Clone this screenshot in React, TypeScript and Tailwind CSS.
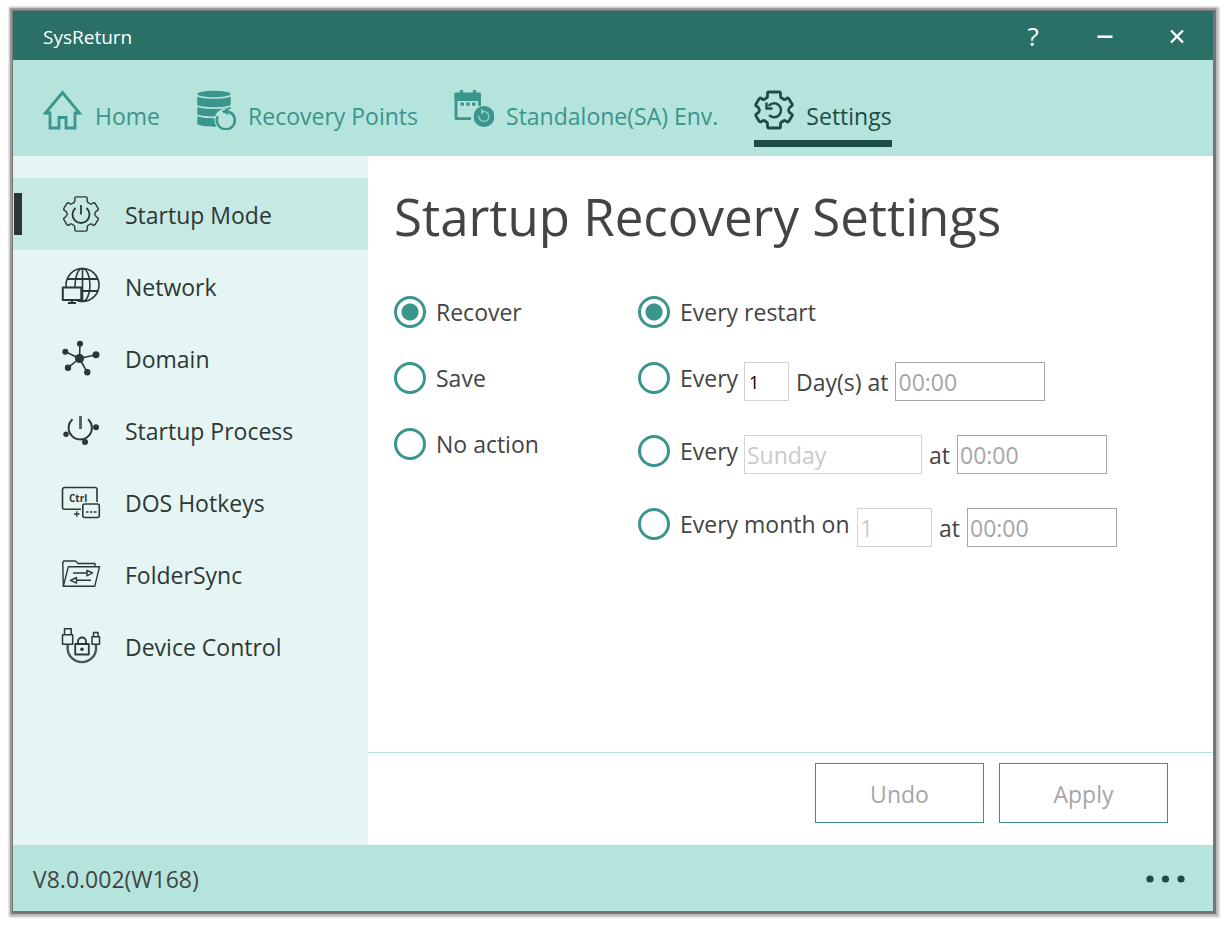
import React, { useState } from 'react';
import clsx from 'clsx';

// Six-toothed gear, shared by the settings tab and the startup mode entry
const GEAR =
    "M15 2h10q1.500 0 1.500 1.500V6q0 2 2 2.500l1.500 1q1 .5 2.500-1 1.500-1 2.500.5l3 5q.8 1.500-1 2.500-2.500 1.500-2.500 3.500t2.500 3.500q1.800 1 1 2.500l-3 5q-1 1.500-2.500.5-1.500-1.500-2.500-1l-1.500 1q-2 .5-2 2.500v2.500q0 1.500-1.500 1.500H15q-1.500 0-1.500-1.500V34q0-2-2-2.500l-1.500-1q-1-.5-2.500 1-1.500 1-2.500-.5l-3-5q-.8-1.500 1-2.500Q5.500 22 5.500 20T3 16.500Q1.200 15.500 2 14l3-5q1-1.500 2.500-.5 1.500 1.500 2.500 1l1.500-1q2-.5 2-2.500V3.500Q13.500 2 15 2z";

function Icon({ children, width = 1.6 }: { children: React.ReactNode; width?: number }) {
    return (
        <svg
            viewBox="0 0 40 40"
            className="size-10 shrink-0"
            fill="none"
            stroke="currentColor"
            strokeWidth={width}
            strokeLinejoin="round"
            aria-hidden="true"
        >
            {children}
        </svg>
    );
}

const HomeIcon = () => (
    <Icon width={2.8}>
        <path d="M19.500 2.500 2.500 23H7v15h9V27.500h7V38h9V23h4.500z" strokeLinejoin="miter" />
    </Icon>
);

const RecoveryIcon = () => (
    <Icon>
        <g fill="currentColor" stroke="none">
            <ellipse cx="18" cy="4" rx="16.7" ry="3.3" />
            <path d="M1.300 6.500c4 3 29.400 3 33.400 0v8.500c-4 3-29.400 3-33.400 0z" />
            <path d="M1.300 16.800c4 3 29.400 3 33.400 0v7.500c-4 3-29.400 3-33.400 0z" />
            <path d="M1.300 26c4 3 29.400 3 33.400 0v8c-4 3.500-29.400 3.500-33.400 0z" />
        </g>
        <circle cx="30" cy="30" r="11.5" fill="#b5e4dd" stroke="none" />
        <path d="M27 21.800a9 9 0 1 1-5.200 4.500" strokeWidth="2.6" />
        <path d="M32.500 17.500v7.500l-6.500-3.500z" fill="currentColor" stroke="none" />
    </Icon>
);

const CalendarIcon = () => (
    <Icon width={2.8}>
        <path d="M17 28.600H2V4h23.500v12" />
        <path d="M.6 3h26.200v8H.6z" fill="currentColor" stroke="none" />
        <path d="M7.500 0v5M20.500 0v5M6.500 14.200H10M12.300 14.200h3.500M18 14.200h3.500" strokeWidth="3.2" />
        <circle cx="30" cy="26.5" r="10.5" fill="currentColor" stroke="none" />
        <path d="M29.500 21.500a5 5 0 1 1-4.500 4" stroke="#8cc8c0" strokeWidth="1.5" />
        <path d="m27 18.500 4 3-4 3z" fill="#8cc8c0" stroke="none" />
    </Icon>
);

const SettingsIcon = () => (
    <Icon width={2.8}>
        <path d={GEAR} />
        <path d="M14.500 16a7 7 0 1 1 .5 9.200" strokeWidth="2.4" />
        <path d="M12.500 12.500v6h6" strokeWidth="2.4" />
    </Icon>
);

const StartupModeIcon = () => (
    <Icon width={1.5}>
        <path d={GEAR} transform="translate(1 1) scale(.95)" />
        <path d="M14.500 14a8.500 8.500 0 1 0 11 0M20 11v9.500" strokeWidth="1.8" />
    </Icon>
);

const NetworkIcon = () => (
    <Icon>
        <circle cx="21.5" cy="19" r="16.5" />
        <ellipse cx="21.5" cy="19" rx="7.5" ry="16.5" />
        <path d="M21.500 2.500v33" />
        <path d="M6 13h31M5 25h32" strokeWidth="2" />
        <path d="M1.800 21.500h18.500v12.500H1.800z" fill="#e5f5f3" strokeWidth="2" />
        <path d="M11 34v3M7 37h8" strokeWidth="2" />
    </Icon>
);

const DomainIcon = () => (
    <Icon>
        <path d="M18.500 20.500 19 6M18.500 20.500 4.500 13.700M18.500 20.500 35 16.700M18.500 20.500 7 29.700M18.500 20.500l7.800 13.800" />
        <g fill="currentColor" stroke="none">
            <circle cx="18.5" cy="20.5" r="4.6" />
            <circle cx="19" cy="5.7" r="3" />
            <circle cx="4.3" cy="13.7" r="3" />
            <circle cx="35" cy="16.7" r="3.5" />
            <circle cx="7" cy="29.7" r="3.2" />
            <circle cx="26.3" cy="34.3" r="3.2" />
        </g>
    </Icon>
);

const StartupProcessIcon = () => (
    <Icon width={2}>
        <path d="M11.500 9.200a11.600 11.600 0 1 0 15.500 0" />
        <path d="M19.500 6v13" strokeWidth="2.8" opacity=".8" />
        <g fill="currentColor" stroke="none">
            <circle cx="5" cy="24.3" r="2.7" />
            <circle cx="24" cy="32" r="3" />
            <circle cx="35" cy="17.3" r="3" />
        </g>
    </Icon>
);

const HotkeysIcon = () => (
    <Icon>
        <path d="M20 27.300H3.500a2 2 0 0 1-2-2V7.500a2 2 0 0 1 2-2h30.500a2 2 0 0 1 2 2V20" />
        <text x="8" y="20" className="text-[10px] font-bold" fill="currentColor" stroke="none">Ctrl</text>
        <rect x="21.8" y="22" width="16.5" height="13.5" rx="2" />
        <path d="M25 30h2.500M29 30h2.500M33 30h2.500M13 32h5.500M15.800 29.300v5.500" strokeWidth="1.3" />
    </Icon>
);

const FolderIcon = () => (
    <Icon width={1.4}>
        <path d="M2.300 32.300 1.800 8.500l1-1.500H14.500L17 9.500h17v3" />
        <path d="M7.300 12.800h31.200L33.700 32.300H2.300z" />
        <path d="M12 19h14M26 16.300l5.500 2.700-5.500 2.800zM30 26.300H15.500M15.500 23.500 9.500 26.300l6 2.800z" />
    </Icon>
);

const DeviceIcon = () => (
    <Icon width={1.5}>
        <path d="M3.500 2.800h6.700v6H3.500zM1.500 8.800h10.200v9.500H1.500zM32.500 6.500h4.500v4.300h-4.500zM31 10.800h7.500v7.500H31z" />
        <path d="M6.700 18.300v5a14.200 14 0 0 0 28.300 0v-5" strokeWidth="2.4" opacity=".85" />
        <path d="M14.200 18h13.600v10.500H14.200zM17 18v-2.500a4 4 0 0 1 8 0V18" strokeWidth="1.8" />
        <circle cx="21" cy="23.2" r="1.8" fill="currentColor" stroke="none" />
    </Icon>
);

const tabs = [
    { name: 'Home', icon: HomeIcon },
    { name: 'Recovery Points', icon: RecoveryIcon },
    { name: 'Standalone(SA) Env.', icon: CalendarIcon },
    { name: 'Settings', icon: SettingsIcon },
];

const sections = [
    { name: 'Startup Mode', icon: StartupModeIcon },
    { name: 'Network', icon: NetworkIcon },
    { name: 'Domain', icon: DomainIcon },
    { name: 'Startup Process', icon: StartupProcessIcon },
    { name: 'DOS Hotkeys', icon: HotkeysIcon },
    { name: 'FolderSync', icon: FolderIcon },
    { name: 'Device Control', icon: DeviceIcon },
];

const weekdays = ['Sunday', 'Monday', 'Tuesday', 'Wednesday', 'Thursday', 'Friday', 'Saturday'];

interface RadioProps {
    name: string;
    label: string;
    checked: boolean;
    onChange: () => void;
    className?: string;
}

function Radio({ name, label, checked, onChange, className }: RadioProps) {
    return (
        <label className={clsx("flex h-8 items-center gap-2.5 whitespace-nowrap", className)}>
            <input
                type="radio"
                name={name}
                checked={checked}
                onChange={onChange}
                className="size-8 shrink-0 appearance-none rounded-full border-3 border-[#3a958c] checked:bg-[radial-gradient(circle,#3a958c_8px,transparent_9px)]"
            />
            {label}
        </label>
    );
}

function TimeField({ label, disabled }: { label: string; disabled: boolean }) {
    return (
        <input
            type="text"
            aria-label={label}
            defaultValue="00:00"
            disabled={disabled}
            className="h-[39px] w-[150px] border border-[#a6a6a6] bg-white px-0.5 disabled:text-[#a6a6a6]"
        />
    );
}

export default function App() {
    const [tab, setTab] = useState('Settings');
    const [section, setSection] = useState('Startup Mode');
    const [action, setAction] = useState('Recover');
    const [schedule, setSchedule] = useState('restart');

    return (
        <div className="flex min-h-screen flex-col bg-white pt-[11px] pr-[15px] pb-[17px] pl-[13px] font-['Open_Sans','Noto_Sans',sans-serif] text-[23px] leading-7 text-[#444]">
            <div className="flex flex-1 flex-col bg-white shadow-[1px_1px_0_2px_#757575,0_0_0_3px_#9a9a9a,1px_1px_2px_5px_#b8b8b8]">
                <header className="flex h-[49px] items-center bg-[#2b7067] pl-[30px] text-white">
                    <span className="flex-1 pt-0.5 text-[19px]">SysReturn</span>
                    <button type="button" aria-label="Help" className="flex h-full w-[72px] items-center justify-center text-[26px] font-medium">?</button>
                    <button type="button" aria-label="Minimize" className="flex h-full w-[72px] items-center justify-center">
                        <svg viewBox="0 0 16 16" className="size-4" stroke="currentColor" strokeWidth="2.5"><path d="M.5 8.700h15" /></svg>
                    </button>
                    <button type="button" aria-label="Close" className="flex h-full w-[72px] items-center justify-center">
                        <svg viewBox="0 0 16 16" className="size-4" stroke="currentColor" strokeWidth="2.4"><path d="m2 2.500 12 12m0-12-12 12" /></svg>
                    </button>
                </header>

                <nav className="flex h-24 gap-9 bg-[#b5e4dd] pt-[30px] pl-[30px]">
                    {tabs.map(({ name, icon: TabIcon }) => (
                        <button
                            key={name}
                            type="button"
                            onClick={() => setTab(name)}
                            className={clsx(
                                "flex h-[57px] items-end gap-3 border-b-7 pb-2.5 whitespace-nowrap",
                                tab === name ? "border-[#1c4c46] text-[#1c4c46]" : "border-transparent text-[#3a958c]"
                            )}
                        >
                            <TabIcon />
                            {name}
                        </button>
                    ))}
                </nav>

                <div className="flex flex-1">
                    <aside className="w-[355px] shrink-0 bg-[#e5f5f3] pt-[22px] text-[#2d3836]">
                        {sections.map(({ name, icon: SectionIcon }) => (
                            <button
                                key={name}
                                type="button"
                                onClick={() => setSection(name)}
                                className={clsx("flex h-[72px] w-full items-center pl-px", section === name && "bg-[#c6e9e4]")}
                            >
                                <span className={clsx("mr-[39px] h-[42px] w-2", section === name && "bg-[#2d3836]")} />
                                <SectionIcon />
                                <span className="pt-0.5 pl-6">{name}</span>
                            </button>
                        ))}
                    </aside>

                    <main className="flex min-w-0 flex-1 flex-col">
                        <div className="flex-1 pt-6 pl-[26px]">
                            <h1 className="text-[51px] leading-[72px]">Startup Recovery Settings</h1>

                            <div className="flex pt-11">
                                <div className="flex w-[244px] flex-col gap-[34px]">
                                    {['Recover', 'Save', 'No action'].map((name) => (
                                        <Radio key={name} name="action" label={name} checked={action === name} onChange={() => setAction(name)} />
                                    ))}
                                </div>

                                <div className="flex flex-col gap-[34px]">
                                    <Radio name="schedule" label="Every restart" checked={schedule === 'restart'} onChange={() => setSchedule('restart')} />

                                    <div className="flex items-start">
                                        <Radio className="w-[106px]" name="schedule" label="Every" checked={schedule === 'daily'} onChange={() => setSchedule('daily')} />
                                        <div className="flex items-center gap-[7px]">
                                            <input type="text" aria-label="Days" defaultValue="1" className="h-[39px] w-[45px] border border-[#d2d2d2] px-1 text-[18px] text-black" />
                                            <span>Day(s) at</span>
                                            <TimeField label="Daily time" disabled={schedule !== 'daily'} />
                                        </div>
                                    </div>

                                    <div className="flex items-start">
                                        <Radio className="w-[106px]" name="schedule" label="Every" checked={schedule === 'weekly'} onChange={() => setSchedule('weekly')} />
                                        <div className="flex items-center gap-[7px]">
                                            <select
                                                aria-label="Weekday"
                                                disabled={schedule !== 'weekly'}
                                                className="h-[39px] w-[178px] appearance-none border border-[#d2d2d2] px-0.5 leading-8 disabled:text-[#cacaca] disabled:opacity-100"
                                            >
                                                {weekdays.map((day) => <option key={day}>{day}</option>)}
                                            </select>
                                            <span>at</span>
                                            <TimeField label="Weekly time" disabled={schedule !== 'weekly'} />
                                        </div>
                                    </div>

                                    <div className="flex items-start">
                                        <Radio className="w-[219px]" name="schedule" label="Every month on" checked={schedule === 'monthly'} onChange={() => setSchedule('monthly')} />
                                        <div className="flex items-center gap-[7px]">
                                            <select
                                                aria-label="Day of month"
                                                disabled={schedule !== 'monthly'}
                                                className="h-[39px] w-[75px] appearance-none border border-[#d2d2d2] px-0.5 leading-8 disabled:text-[#cacaca] disabled:opacity-100"
                                            >
                                                {Array.from({ length: 31 }, (_, i) => <option key={i}>{i + 1}</option>)}
                                            </select>
                                            <span>at</span>
                                            <TimeField label="Monthly time" disabled={schedule !== 'monthly'} />
                                        </div>
                                    </div>
                                </div>
                            </div>
                        </div>

                        <div className="flex justify-end gap-[15px] border-t border-[#b5e4dd] pt-2.5 pr-[45px] pb-[22px]">
                            {['Undo', 'Apply'].map((name) => (
                                <button key={name} type="button" disabled className="h-[60px] w-[169px] border border-[#3f8e86] pt-0.5 text-[#a6a6a6]">
                                    {name}
                                </button>
                            ))}
                        </div>
                    </main>
                </div>

                <footer className="flex h-[66px] items-center justify-between bg-[#b5e4dd] pr-7 pl-5">
                    <span className="pt-0.5">V8.0.002(W168)</span>
                    <button type="button" aria-label="More" className="pt-0.5 text-[#1c4c46]">
                        <svg viewBox="0 0 40 8" className="h-2 w-10" fill="currentColor">
                            <circle cx="5" cy="4" r="3.6" />
                            <circle cx="20.5" cy="4" r="3.6" />
                            <circle cx="36" cy="4" r="3.6" />
                        </svg>
                    </button>
                </footer>
            </div>
        </div>
    );
}
